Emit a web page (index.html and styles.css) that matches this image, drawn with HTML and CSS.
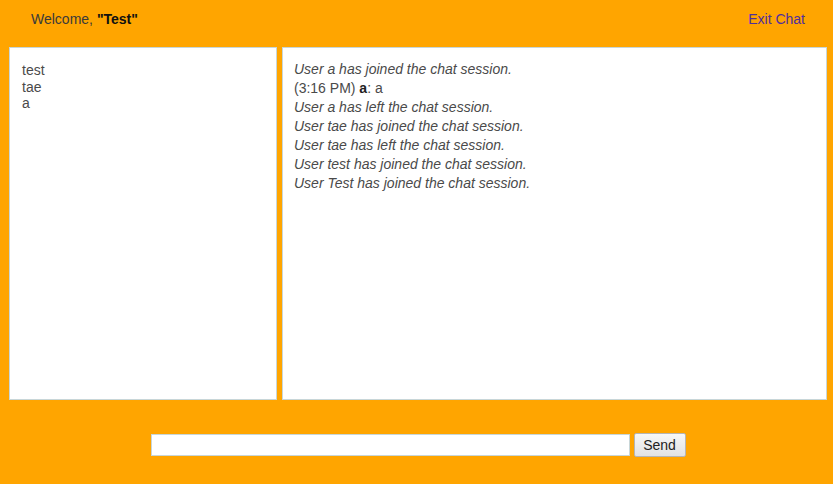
FILE: index.html
```html
<!DOCTYPE html>
<html>
<head>
<meta charset="utf-8">
<link rel="stylesheet" href="styles.css">
</head>
<body>
<div class="wrapper">
  <div class="menu">
    <p class="welcome">Welcome, <b>"Test"</b></p>
    <a class="logout" href="#">Exit Chat</a>
  </div>
  <div class="panels">
    <div class="users">
      <div>test</div>
      <div>tae</div>
      <div>a</div>
    </div>
    <div class="chatbox">
      <div class="msgln note">User a has joined the chat session.</div>
      <div class="msgln">(3:16 PM) <b>a</b>: a</div>
      <div class="msgln note">User a has left the chat session.</div>
      <div class="msgln note">User tae has joined the chat session.</div>
      <div class="msgln note">User tae has left the chat session.</div>
      <div class="msgln note">User test has joined the chat session.</div>
      <div class="msgln note">User Test has joined the chat session.</div>
    </div>
  </div>
  <form class="send-form">
    <input class="usermsg" type="text">
    <button class="submit" type="button">Send</button>
  </form>
</div>
</body>
</html>
```
FILE: styles.css
```css
html, body {
  margin: 0;
  padding: 0;
  background: #ffa500;
  font-family: "Liberation Sans", Arial, sans-serif;
  font-size: 14px;
  color: #333;
}
.wrapper {
  height: 484px;
  display: flex;
  flex-direction: column;
}
.menu {
  height: 47px;
  display: flex;
  align-items: center;
  justify-content: space-between;
  padding: 0 28px 0 31px;
  box-sizing: border-box;
}
.welcome {
  margin: 0;
  color: #3a3a3a;
  position: relative;
  top: -5px;
}
.welcome b { color: #111; }
.logout {
  color: #4f2f9e;
  text-decoration: none;
  position: relative;
  top: -5px;
}
.panels {
  display: flex;
  gap: 5px;
  padding: 0 6px 0 9px;
  height: 353px;
}
.users, .chatbox {
  background: #fff;
  border: 1px solid #c8d6d8;
  box-sizing: border-box;
  padding: 14px 11px;
  color: #4a4a4a;
}
.users {
  width: 268px;
  line-height: 16.5px;
  padding-left: 12px;
}
.chatbox {
  flex: 1;
  line-height: 19px;
  padding-top: 12px;
}
.note { font-style: italic; }
.msgln b { color: #222; }
.send-form {
  display: flex;
  justify-content: center;
  align-items: center;
  gap: 4px;
  margin: 33px 0 0 0;
  padding-left: 3px;
}
.usermsg {
  width: 479px;
  height: 22px;
  box-sizing: border-box;
  border: 1px solid #c8d6d8;
  background: #fff;
  margin: 0;
  padding: 0 3px;
  font-family: "Liberation Sans", Arial, sans-serif;
}
.submit {
  width: 52px;
  height: 24px;
  margin: 0;
  padding: 0;
  box-sizing: border-box;
  border: 1px solid #b5b5b5;
  border-radius: 2px;
  background: linear-gradient(#f7f7f7, #e2e2e2);
  font-family: "Liberation Sans", Arial, sans-serif;
  font-size: 14px;
  color: #222;
}
```
